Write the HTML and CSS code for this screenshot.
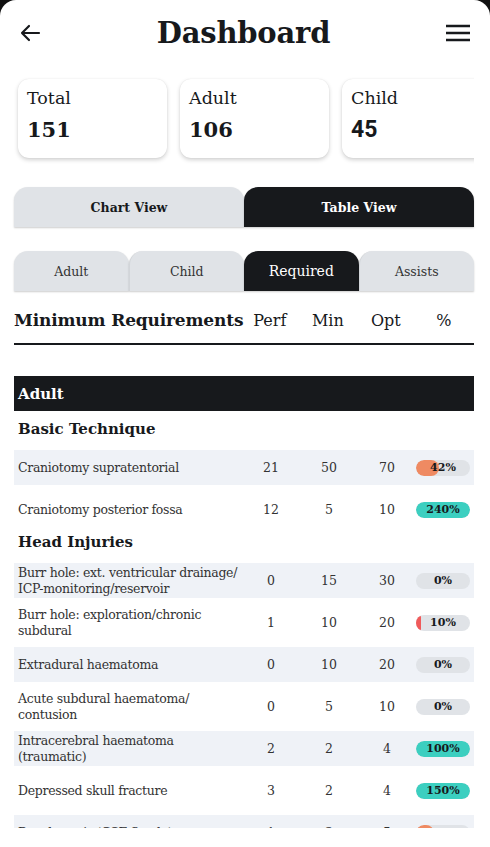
FILE: index.html
```html
<!DOCTYPE html>
<html>
<head>
<meta charset="utf-8">
<link rel="stylesheet" href="styles.css">
</head>
<body>
<div class="screen">
  <div class="content">
    <header class="topbar">
      <svg class="icon" width="24" height="24" viewBox="0 0 24 24"><path d="M21 12H4M11 5l-7 7 7 7" fill="none" stroke="#17191c" stroke-width="2.2" stroke-linecap="round" stroke-linejoin="round"/></svg>
      <h1 class="title">Dashboard</h1>
      <svg class="icon" width="26" height="24" viewBox="0 0 26 24"><path d="M1 5h24M1 12h24M1 19h24" fill="none" stroke="#17191c" stroke-width="2.6"/></svg>
    </header>

    <div class="cards">
      <div class="card"><div class="card-label">Total</div><div class="card-num">151</div></div>
      <div class="card"><div class="card-label">Adult</div><div class="card-num">106</div></div>
      <div class="card"><div class="card-label">Child</div><div class="card-num sans">45</div></div>
    </div>

    <div class="toggle">
      <div class="tog">Chart View</div>
      <div class="tog active">Table View</div>
    </div>

    <div class="tabs">
      <div class="tab">Adult</div>
      <div class="tab">Child</div>
      <div class="tab active">Required</div>
      <div class="tab">Assists</div>
    </div>

    <div class="thead">
      <div class="th-name">Minimum Requirements</div>
      <div class="th">Perf</div>
      <div class="th">Min</div>
      <div class="th">Opt</div>
      <div class="th">%</div>
    </div>

    <div class="band">Adult</div>

    <div class="section first">Basic Technique</div>
    <div class="row alt"><div class="name">Craniotomy supratentorial</div><div class="num">21</div><div class="num">50</div><div class="num">70</div><div class="barcell"><div class="bar"><div class="fill orange" style="width:42%"></div><span>42%</span></div></div></div>
    <div class="row"><div class="name">Craniotomy posterior fossa</div><div class="num">12</div><div class="num">5</div><div class="num">10</div><div class="barcell"><div class="bar"><div class="fill teal" style="width:100%"></div><span>240%</span></div></div></div>

    <div class="section">Head Injuries</div>
    <div class="row alt"><div class="name">Burr hole: ext. ventricular drainage/ ICP-monitoring/reservoir</div><div class="num">0</div><div class="num">15</div><div class="num">30</div><div class="barcell"><div class="bar"><span>0%</span></div></div></div>
    <div class="row"><div class="name">Burr hole: exploration/chronic subdural</div><div class="num">1</div><div class="num">10</div><div class="num">20</div><div class="barcell"><div class="bar"><div class="fill red" style="width:10%"></div><span>10%</span></div></div></div>
    <div class="row alt"><div class="name">Extradural haematoma</div><div class="num">0</div><div class="num">10</div><div class="num">20</div><div class="barcell"><div class="bar"><span>0%</span></div></div></div>
    <div class="row"><div class="name">Acute subdural haematoma/ contusion</div><div class="num">0</div><div class="num">5</div><div class="num">10</div><div class="barcell"><div class="bar"><span>0%</span></div></div></div>
    <div class="row alt"><div class="name">Intracerebral haematoma (traumatic)</div><div class="num">2</div><div class="num">2</div><div class="num">4</div><div class="barcell"><div class="bar"><div class="fill teal" style="width:100%"></div><span>100%</span></div></div></div>
    <div class="row"><div class="name">Depressed skull fracture</div><div class="num">3</div><div class="num">2</div><div class="num">4</div><div class="barcell"><div class="bar"><div class="fill teal" style="width:100%"></div><span>150%</span></div></div></div>
    <div class="row alt"><div class="name">Dural repair (CSF fistula)</div><div class="num">1</div><div class="num">3</div><div class="num">5</div><div class="barcell"><div class="bar"><div class="fill orange" style="width:33%"></div><span>33%</span></div></div></div>
  </div>
</div>
</body>
</html>
```

FILE: styles.css
```css
* { box-sizing: border-box; }
html, body { margin: 0; padding: 0; background: #111; }
body { font-family: "DejaVu Serif", "Liberation Serif", serif; color: #17191c; }

.screen {
  width: 490px;
  height: 847px;
  background: #fff;
  border-radius: 16px 16px 0 0;
  overflow: hidden;
}
.content {
  height: 828px;
  overflow: hidden;
}

.topbar {
  height: 66px;
  display: flex;
  align-items: center;
  justify-content: space-between;
  padding: 0 19px 0 18px;
}
.title {
  margin: 0;
  font-size: 29px;
  font-weight: 700;
  letter-spacing: -0.2px;
}
.icon { display: block; }

.cards {
  display: flex;
  gap: 13px;
  margin: 0 16px 0 14px;
  padding: 13px 0 29px 4px;
  overflow: hidden;
}
.card {
  flex: 0 0 149px;
  height: 79px;
  border-radius: 11px;
  background: #fff;
  box-shadow: 0 2px 4px rgba(0,0,0,0.18), 0 0 1px rgba(0,0,0,0.12);
  padding: 8px 9px;
}
.card-label { font-size: 17.5px; line-height: 22px; }
.card-num { font-size: 21px; font-weight: 700; margin-top: 9px; line-height: 24px; }
.card-num.sans { font-family: Roboto, "Liberation Sans", sans-serif; font-size: 23px; }

.toggle {
  display: flex;
  margin: 0 16px 0 14px;
}
.tog {
  flex: 1;
  height: 40px;
  border-radius: 14px 14px 0 0;
  background: #e0e3e7;
  box-shadow: 0 1px 2px rgba(0,0,0,0.2);
  display: flex;
  align-items: center;
  justify-content: center;
  font-size: 12.5px;
  font-weight: 700;
}
.tog.active { background: #17191c; color: #fff; }

.tabs {
  display: flex;
  margin: 24px 16px 0 14px;
}
.tab {
  flex: 1;
  height: 40px;
  border-radius: 14px 14px 0 0;
  background: #e0e3e7;
  box-shadow: 0 1px 2px rgba(0,0,0,0.2);
  display: flex;
  align-items: center;
  justify-content: center;
  font-size: 12.5px;
  color: #333;
  border-left: 1px solid #d2d5d9;
}
.tab:first-child { border-left: 0; }
.tab.active { background: #17191c; color: #fff; font-size: 14px; border-left: 0; }

.thead, .row {
  display: grid;
  grid-template-columns: 1fr 58px 58px 58px 58px;
  align-items: center;
}
.thead {
  margin: 12px 16px 0 14px;
  height: 42px;
  border-bottom: 2.5px solid #17191c;
  padding-bottom: 6px;
}
.th-name { font-size: 17px; font-weight: 700; white-space: nowrap; letter-spacing: -0.15px; }
.th { font-size: 16px; text-align: center; padding-right: 5px; }

.band {
  margin: 31px 16px 0 14px;
  height: 35px;
  background: #17191c;
  color: #fff;
  font-size: 15px;
  font-weight: 700;
  display: flex;
  align-items: center;
  padding-left: 4px;
}
.section {
  margin: 0 16px 0 14px;
  padding: 4px 4px 0;
  height: 36px;
  line-height: 22px;
  font-size: 15px;
  font-weight: 700;
}
.section.first { margin-top: 3px; }
.row {
  margin: 0 16px 0 14px;
  height: 35px;
  font-size: 12.5px;
  color: #333;
}
.row + .row { margin-top: 7px; }
.row.alt { background: #eff2f7; }
.name { padding-left: 4px; line-height: 16px; letter-spacing: -0.3px; }
.num { text-align: center; font-size: 12.5px; }
.barcell { display: flex; }
.bar {
  position: relative;
  width: 54px;
  height: 16px;
  border-radius: 8px;
  background: #e0e3e7;
  overflow: hidden;
}
.fill {
  height: 100%;
  border-radius: 8px;
}
.fill.orange { background: #ef8a62; }
.fill.teal { background: #3ccfc0; }
.fill.red { background: #f05a5a; }
.bar span {
  position: absolute;
  inset: 0;
  display: flex;
  align-items: center;
  justify-content: center;
  font-size: 11px;
  font-weight: 700;
  color: #17191c;
}
```
